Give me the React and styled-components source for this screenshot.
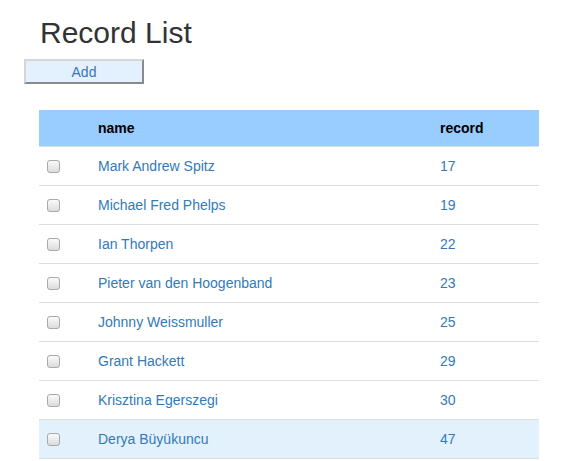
import React from "react";
import styled, { createGlobalStyle } from "styled-components";

const GlobalStyle = createGlobalStyle`
  body {
    margin: 0;
    background: #fff;
    font-family: "Liberation Sans", Arial, sans-serif;
    font-size: 14px;
    color: #333;
  }
`;

const Page = styled.div`
  display: flex;
  flex-direction: column;
  padding-top: 16px;
`;

const Title = styled.h1`
  margin: 0 0 10px 40px;
  font-size: 30px;
  line-height: 33px;
  font-weight: normal;
  color: #333;
`;

const AddButton = styled.button`
  align-self: flex-start;
  margin-left: 24px;
  width: 120px;
  height: 25px;
  padding: 1px 0 0;
  background: #e3f1ff;
  border: 2px solid;
  border-color: #d6d6d6 #8a8a8a #8a8a8a #d6d6d6;
  color: #3d75b5;
  font-family: inherit;
  font-size: 14px;
  line-height: 19px;
`;

const Table = styled.table`
  margin: 26px 0 0 39px;
  width: 500px;
  border-collapse: collapse;
  table-layout: fixed;
`;

const Th = styled.th`
  height: 36px;
  padding: 0 8px;
  background: #99ccff;
  color: #000;
  font-weight: bold;
  text-align: left;
  border-bottom: 1px solid #ddd;
  width: ${(p) => p.$w || "auto"};
`;

const Row = styled.tr`
  background: ${(p) => (p.$active ? "#e3f1fd" : "#fff")};
  border-bottom: 1px solid #ddd;
`;

const Td = styled.td`
  height: 38px;
  padding: 0 8px;
  color: #337ab7;
  vertical-align: middle;
`;

const Check = styled.input.attrs({ type: "checkbox" })`
  appearance: none;
  display: block;
  margin: 0;
  width: 13px;
  height: 13px;
  border: 1px solid #a9a9a9;
  border-radius: 3px;
  background: linear-gradient(#fafafa, #dcdcdc);
`;

const records = [
  ["Mark Andrew Spitz", 17],
  ["Michael Fred Phelps", 19],
  ["Ian Thorpen", 22],
  ["Pieter van den Hoogenband", 23],
  ["Johnny Weissmuller", 25],
  ["Grant Hackett", 29],
  ["Krisztina Egerszegi", 30],
  ["Derya Büyükuncu", 47],
];

export default function App() {
  return (
    <>
      <GlobalStyle />
      <Page>
        <Title>Record List</Title>
        <AddButton>Add</AddButton>
        <Table>
          <thead>
            <tr>
              <Th $w="35px"></Th>
              <Th $w="326px">name</Th>
              <Th>record</Th>
            </tr>
          </thead>
          <tbody>
            {records.map(([name, rec], i) => (
              <Row key={name} $active={i === records.length - 1}>
                <Td>
                  <Check />
                </Td>
                <Td>{name}</Td>
                <Td>{rec}</Td>
              </Row>
            ))}
          </tbody>
        </Table>
      </Page>
    </>
  );
}
